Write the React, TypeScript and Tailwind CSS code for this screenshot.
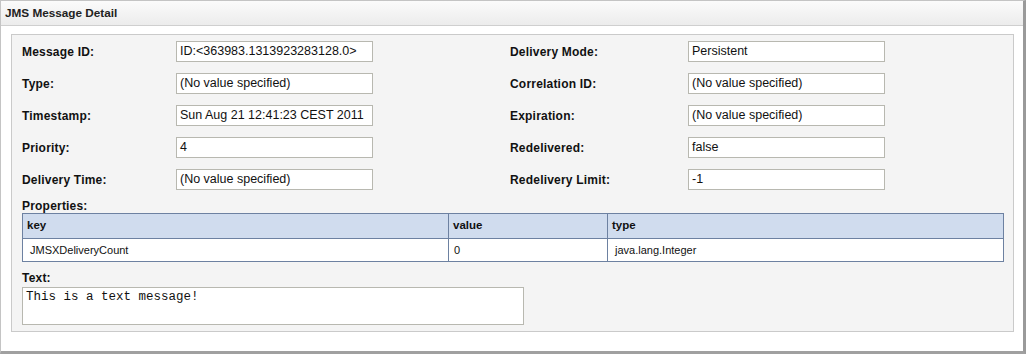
import React from "react";

const rows: [string, string, string, string][] = [
  ["Message ID:", "ID:<363983.1313923283128.0>", "Delivery Mode:", "Persistent"],
  ["Type:", "(No value specified)", "Correlation ID:", "(No value specified)"],
  ["Timestamp:", "Sun Aug 21 12:41:23 CEST 2011", "Expiration:", "(No value specified)"],
  ["Priority:", "4", "Redelivered:", "false"],
  ["Delivery Time:", "(No value specified)", "Redelivery Limit:", "-1"],
];

function Field({ value }: { value: string }) {
  return (
    <div className="w-[197px] h-[21px] bg-white border border-[#b8b8b0] pl-[3px] flex items-center text-[12.5px] text-[#111] whitespace-nowrap overflow-hidden font-['Liberation_Sans',Arial,sans-serif]">
      {value}
    </div>
  );
}

export default function App() {
  return (
    <div className="w-[1027px] h-[355px] bg-white font-['Liberation_Sans',Arial,sans-serif]">
      <div className="w-[1026px] h-[354px] border-l border-t border-[#c4c4c4] border-r-[3px] border-r-[#9a9a9a] border-b-[3px] border-b-[#a0a0a0] flex flex-col">
        <div className="h-[25px] border-b border-[#cfcfcf] bg-gradient-to-b from-[#fbfbfb] to-[#ececec] flex items-center pl-[4px] text-[11.75px] font-bold text-[#222]">
          JMS Message Detail
        </div>
        <div className="pt-[8px] pl-[10px] pr-[9px]">
          <div className="bg-[#f4f4f4] border border-[#cacaca] h-[298px] pl-[10px] pt-[6px]">
            <div className="flex flex-col gap-[11px]">
              {rows.map(([l1, v1, l2, v2], i) => (
                <div key={i} className="flex items-center h-[21px]">
                  <div className="w-[154px] text-[12px] tracking-[0.2px] font-bold text-[#111]">{l1}</div>
                  <Field value={v1} />
                  <div className="w-[137px]" />
                  <div className="w-[178px] text-[12px] tracking-[0.2px] font-bold text-[#111]">{l2}</div>
                  <Field value={v2} />
                </div>
              ))}
            </div>
            <div className="mt-[10px] text-[12px] tracking-[0.2px] font-bold text-[#111] leading-[13px]">Properties:</div>
            <div className="w-[982px] border border-[#6d81a1] text-[11px] text-[#111]">
              <div className="flex h-[25px] bg-[#d0dcee] border-b border-[#6d81a1] font-bold text-[11.5px]">
                <div className="w-[426px] border-r border-[#6d81a1] flex items-center pl-[4px]">key</div>
                <div className="w-[159px] border-r border-[#6d81a1] flex items-center pl-[4px]">value</div>
                <div className="flex-1 flex items-center pl-[4px]">type</div>
              </div>
              <div className="flex h-[22px] bg-white">
                <div className="w-[426px] border-r border-[#6d81a1] flex items-center pl-[7px]">JMSXDeliveryCount</div>
                <div className="w-[159px] border-r border-[#6d81a1] flex items-center pl-[5px]">0</div>
                <div className="flex-1 flex items-center pl-[7px]">java.lang.Integer</div>
              </div>
            </div>
            <div className="mt-[10px] text-[12px] tracking-[0.2px] font-bold text-[#111] leading-[13px]">Text:</div>
            <div className="mt-[2px] w-[502px] h-[38px] bg-white border border-[#b8b8b0] pl-[3px] pt-[2px] text-[12.5px] leading-[14px] text-[#111] font-['Liberation_Mono','Courier_New',monospace]">
              This is a text message!
            </div>
          </div>
        </div>
      </div>
    </div>
  );
}
